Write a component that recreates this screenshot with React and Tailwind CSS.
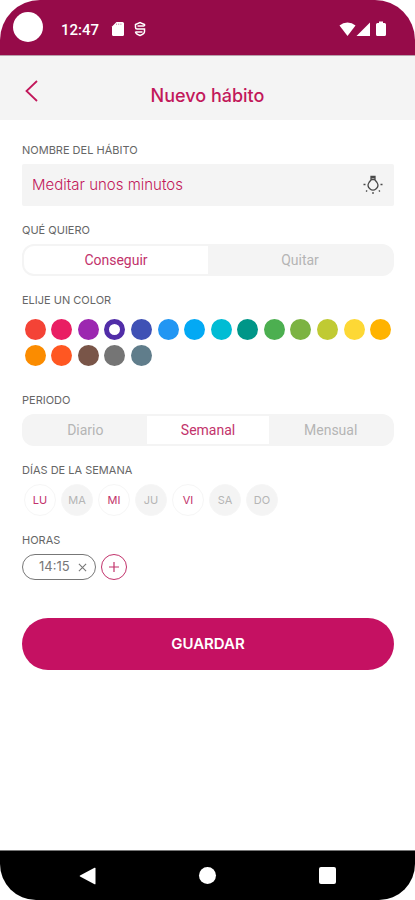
import { useState } from 'react';

const COLORS = [
    '#f44336', '#e91e63', '#9c27b0', '#512da8', '#3f51b5', '#2196f3', '#03a9f4',
    '#00bcd4', '#009688', '#4caf50', '#7cb342', '#c0ca33', '#fdd835', '#ffb300',
    '#fb8c00', '#ff5722', '#795548', '#757575', '#607d8b',
];

const DAYS = ['LU', 'MA', 'MI', 'JU', 'VI', 'SA', 'DO'];

function StatusBar() {
    return (
        <div className="h-14 bg-[#960b49] text-white flex items-center pl-[13px] pr-7 pb-0.5 border-b border-[#b8a0ab]">
            <span className="size-[30px] rounded-full bg-white" />
            <span className="ml-[18px] mt-1.5 font-['Roboto',sans-serif] text-[15px] leading-5 font-medium">12:47</span>
            <svg className="ml-3 mt-1 shrink-0" width="14" height="16" viewBox="0 0 14 16" fill="currentColor">
                <path d="M5.5 1H11.5Q13 1 13 2.500V13.500Q13 15 11.500 15H2.500Q1 15 1 13.500V5.500Z" />
                <path d="M5.500 2.500V4M7.700 2.500V4M9.900 2.500V4" stroke="#960b49" strokeWidth="0.400" />
            </svg>
            <svg className="ml-2 mt-1 shrink-0" width="14" height="16" viewBox="0 0 14 16" fill="none" stroke="currentColor" strokeWidth="1.5">
                <path d="M11.500 5V3.500L7 1.500L2.500 3.500V6.500Q2.500 8 4 8H11.500V10.500Q11.500 13 7 14.500Q2.500 13 2.500 10.800" />
                <path d="M4.500 5H11.500M2.500 11H9.500" strokeWidth="1.400" />
            </svg>
            <div className="ml-auto mt-1 flex items-center">
                <svg width="17" height="16" viewBox="0 0 17 16" fill="currentColor">
                    <path d="M8.500 15L0.500 4.500Q4 1.500 8.500 1.500T16.500 4.500Z" />
                </svg>
                <svg width="15" height="16" viewBox="0 0 15 16" fill="currentColor">
                    <path d="M14 1.500V15H0.500Z" />
                </svg>
                <svg className="ml-1" width="12" height="16" viewBox="0 0 12 16" fill="currentColor">
                    <path d="M4 0.500H8V2H9.500Q11 2 11 3.500V13.500Q11 15 9.500 15H2.500Q1 15 1 13.500V3.500Q1 2 2.500 2H4Z" />
                </svg>
            </div>
        </div>
    );
}

function Label({ children, ...props }) {
    return <div className="mt-4 mb-1.5 text-[11px] leading-4 text-[#666666]" {...props}>{children}</div>;
}

function Segmented({ labelledBy, options, value, onChange }) {
    return (
        <div role="group" aria-labelledby={labelledBy}
            className="flex h-8 p-0.5 rounded-xl bg-[#f4f4f4] overflow-hidden font-['Roboto',sans-serif] text-sm">
            {options.map((option) => (
                <button key={option} type="button" aria-pressed={value === option} onClick={() => onChange(option)}
                    className={`flex-1 first:rounded-l-[10px] last:rounded-r-[10px] ${value === option ? 'bg-white text-[#c2326b]' : 'text-[#b5b5b5]'}`}>
                    {option}
                </button>
            ))}
        </div>
    );
}

function NavBar() {
    return (
        <div className="h-[50px] shrink-0 bg-black text-white flex items-center justify-center gap-[103px] border-t border-[#777777]">
            <button type="button" aria-label="Atrás">
                <svg width="17" height="18" viewBox="0 0 17 18" fill="currentColor">
                    <path d="M15.500 0.800Q16.500 0.300 16.500 1.500V16.500Q16.500 17.700 15.500 17.200L1 9.600Q0.200 9 1 8.400Z" />
                </svg>
            </button>
            <button type="button" aria-label="Inicio" className="size-[17px] rounded-full bg-white" />
            <button type="button" aria-label="Recientes" className="size-[17px] rounded-xs bg-white" />
        </div>
    );
}

export default function App() {
    const [name, setName] = useState('Meditar unos minutos');
    const [goal, setGoal] = useState('Conseguir');
    const [color, setColor] = useState('#512da8');
    const [period, setPeriod] = useState('Semanal');
    const [days, setDays] = useState(['LU', 'MI', 'VI']);
    const [hours, setHours] = useState(['14:15']);

    const toggleDay = (day) => {
        setDays(days.includes(day) ? days.filter((d) => d !== day) : [...days, day]);
    };

    return (
        <div className="min-h-screen flex flex-col bg-white rounded-t-[40px] rounded-b-[36px] overflow-hidden font-['Inter',sans-serif]">
            <StatusBar />

            <header className="h-16 bg-[#f4f4f4] grid grid-cols-[48px_1fr_48px] items-center pt-2">
                <button type="button" aria-label="Volver" className="justify-self-end mb-0.5 mr-2 text-[#c2185b]">
                    <svg width="16" height="24" viewBox="0 0 16 24" fill="none" stroke="currentColor" strokeWidth="1.800">
                        <path d="M13 2L2.500 12L13 22" />
                    </svg>
                </button>
                <h1 className="pt-2 text-center text-lg leading-6 font-medium text-[#c2185b]">Nuevo hábito</h1>
            </header>

            <form className="flex-1 pl-[22px] pr-[21px] pt-1.5 pb-8" onSubmit={(e) => e.preventDefault()}>
                <label htmlFor="name" className="block mt-4 mb-1.5 text-[11px] leading-4 text-[#666666]">NOMBRE DEL HÁBITO</label>
                <div className="flex items-center h-[42px] px-2.5 rounded-xs bg-[#f4f4f4]">
                    <input id="name" type="text" value={name} onChange={(e) => setName(e.target.value)}
                        className="flex-1 min-w-0 bg-transparent text-[15px] font-light text-[#c2185b] focus:outline-none" />
                    <button type="button" aria-label="Sugerencias" className="text-[#4a4a4a]">
                        <svg width="22" height="22" viewBox="0 0 22 22" fill="none" stroke="currentColor" strokeWidth="1.300">
                            <path d="M9 2.500H13V6L15 8.500A4.800 4.800 0 1 1 7 8.500L9 6Z" />
                            <path d="M9 3.500H13M9 5.500H13" />
                            <path d="M1.500 10.500H3.500M18.500 10.500H20.500M4 17.500L5.200 16.500M18 17.500L16.800 16.500M11 18V20" />
                        </svg>
                    </button>
                </div>

                <Label id="goal">QUÉ QUIERO</Label>
                <Segmented labelledBy="goal" options={['Conseguir', 'Quitar']} value={goal} onChange={setGoal} />

                <Label id="color">ELIJE UN COLOR</Label>
                <div role="radiogroup" aria-labelledby="color" className="grid grid-cols-14 auto-rows-[26px] place-items-center pt-0.5 pb-2">
                    {COLORS.map((c) => (
                        <input key={c} type="radio" name="color" aria-label={c} checked={color === c} onChange={() => setColor(c)}
                            className={`appearance-none size-[21px] rounded-full ${color === c ? 'border-5' : ''}`}
                            style={color === c ? { borderColor: c } : { backgroundColor: c }} />
                    ))}
                </div>

                <Label id="period">PERIODO</Label>
                <Segmented labelledBy="period" options={['Diario', 'Semanal', 'Mensual']} value={period} onChange={setPeriod} />

                <Label id="days">DÍAS DE LA SEMANA</Label>
                <div role="group" aria-labelledby="days" className="flex gap-[5px] pl-0.5">
                    {DAYS.map((day) => (
                        <button key={day} type="button" aria-pressed={days.includes(day)} onClick={() => toggleDay(day)}
                            className={`size-8 rounded-full border border-[#f6f6f6] text-[11px] ${days.includes(day) ? 'text-[#c2326b]' : 'bg-[#f4f4f4] text-[#b5b5b5]'}`}>
                            {day}
                        </button>
                    ))}
                </div>

                <Label id="hours">HORAS</Label>
                <div role="group" aria-labelledby="hours" className="flex gap-[5px]">
                    {hours.map((hour, i) => (
                        <div key={i} className="h-[26px] pl-4 pr-2 flex items-center gap-2 rounded-full border border-[#777777] text-[13px] text-[#777777]">
                            {hour}
                            <button type="button" aria-label={`Eliminar ${hour}`} onClick={() => setHours(hours.filter((_, j) => j !== i))}>
                                <svg width="9" height="9" viewBox="0 0 10 10" stroke="currentColor" strokeWidth="1.200">
                                    <path d="M1 1L9 9M9 1L1 9" />
                                </svg>
                            </button>
                        </div>
                    ))}
                    <button type="button" aria-label="Añadir hora" onClick={() => setHours([...hours, '14:15'])}
                        className="size-[26px] flex items-center justify-center rounded-full border border-[#c2326b] text-[#c2326b]">
                        <svg width="10" height="10" viewBox="0 0 10 10" stroke="currentColor" strokeWidth="1.200">
                            <path d="M5 0V10M0 5H10" />
                        </svg>
                    </button>
                </div>

                <button type="submit" className="mt-[38px] w-full h-[52px] rounded-full bg-[#c51162] text-white text-[15px] font-semibold">
                    GUARDAR
                </button>
            </form>

            <NavBar />
        </div>
    );
}
